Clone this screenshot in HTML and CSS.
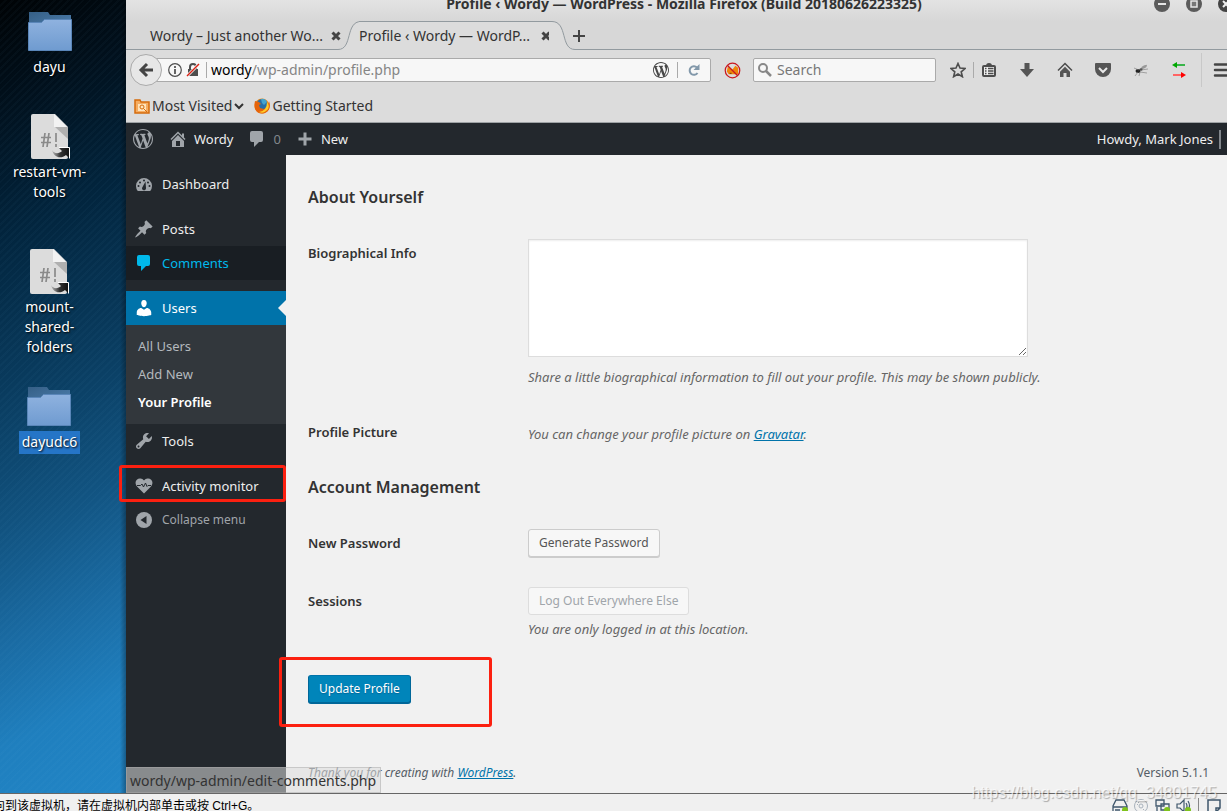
FILE: index.html
```html
<!DOCTYPE html>
<html lang="en">
<head>
<meta charset="utf-8">
<title>Profile ‹ Wordy — WordPress</title>
<link rel="stylesheet" href="styles.css">
</head>
<body>
<svg class="defs" aria-hidden="true">
  <defs>
    <linearGradient id="folderFront" x1="0" y1="0" x2="0" y2="1"><stop offset="0" stop-color="#8fb2df"/><stop offset="1" stop-color="#6f9bd0"/></linearGradient>
    <linearGradient id="folderBack" x1="0" y1="0" x2="1" y2="1"><stop offset="0" stop-color="#355f86"/><stop offset="1" stop-color="#4e7fae"/></linearGradient>
    <linearGradient id="shortcutArrow" x1="0" y1="0" x2="1" y2="0"><stop offset="0" stop-color="#bbb"/><stop offset="0.500" stop-color="#333"/><stop offset="1" stop-color="#111"/></linearGradient>
    <symbol id="folder" viewBox="0 0 46 42">
      <path d="M2 2h19l2 3h21v14H2z" fill="url(#folderBack)"/>
      <path d="M1.500 12.500h13l3-3h27v31h-43z" fill="url(#folderFront)" stroke="#5a86b9"/>
    </symbol>
    <symbol id="script-file" viewBox="0 0 40 48">
      <path d="M3 1h22l13 13v30q0 2-2 2H3q-2 0-2-2V3q0-2 2-2z" fill="#dcdcdc"/>
      <path d="M24 1l13 13H24z" fill="#f2f2f2"/><path d="M25 14h13v12z" fill="#b0b0b0"/>
      <path d="M15 20l-2 14M19 20l-2 14M11 24.500h10M11 29.500h10M26 20v9M26 31v3" stroke="#8a8a8a" stroke-width="1.700" fill="none"/>
      <path d="M22 37c2 4 7 4 10 1l-3-3h10v10l-3-3c-5 4-12 3-14-5z" fill="url(#shortcutArrow)"/>
      <path d="M29 34.500h10.500v11" fill="none" stroke="#fff"/>
    </symbol>
    <symbol id="wp" viewBox="0 0 20 20"><path d="M20 10c0-5.510-4.490-10-10-10C4.480 0 0 4.490 0 10c0 5.520 4.480 10 10 10 5.510 0 10-4.480 10-10zM7.780 15.370L4.370 6.220c.55-.02 1.170-.08 1.170-.08.5-.06.44-1.130-.06-1.110 0 0-1.450.11-2.370.11-.18 0-.37 0-.58-.01C4.120 2.690 6.870 1.110 10 1.110c2.330 0 4.450.87 6.050 2.340-.68-.11-1.650.39-1.650 1.580 0 .74.45 1.360.9 2.100.35.61.55 1.360.55 2.460 0 1.490-1.400 5-1.400 5l-3.030-8.370c.54-.02.82-.17.82-.17.5-.05.44-1.250-.06-1.220 0 0-1.440.12-2.380.12-.87 0-2.330-.12-2.330-.12-.5-.03-.56 1.200-.06 1.220l.92.08 1.260 3.410zM17.410 10c.24-.64.74-1.870.43-4.250.7 1.290 1.050 2.710 1.050 4.250 0 3.290-1.730 6.240-4.400 7.780.97-2.590 1.940-5.200 2.920-7.780zM6.100 18.090C3.120 16.650 1.110 13.530 1.110 10c0-1.300.23-2.480.72-3.590C3.250 10.300 4.670 14.200 6.100 18.090zm4.030-6.630l2.580 6.980c-.86.29-1.760.45-2.710.45-.79 0-1.570-.11-2.290-.33.81-2.380 1.620-4.740 2.420-7.100z"/></symbol>
    <symbol id="home" viewBox="0 0 20 20"><path d="M16 8.500l1.530 1.530-1.060 1.060L10 4.600l-6.470 6.490-1.060-1.060L10 2.500l4 4v-2h2v4zm-6-2.460l6 5.990V18H4v-5.970zM12 17v-5H8v5h4z"/></symbol>
    <symbol id="comment" viewBox="0 0 20 20"><path d="M5 2h9q2 0 2 2v7q0 2-2 2h-2l-5 5v-5H5q-2 0-2-2V4q0-2 2-2z"/></symbol>
  </defs>
</svg>
<div class="screen">
  <div class="machine">
    <aside class="desktop" aria-label="Desktop">
      <div class="shortcut"><svg class="folder"><use href="#folder"/></svg><span class="label">dayu</span></div>
      <div class="shortcut shortcut-two"><svg class="file"><use href="#script-file"/></svg><span class="label">restart-vm-tools</span></div>
      <div class="shortcut shortcut-three"><svg class="file"><use href="#script-file"/></svg><span class="label">mount-<br>shared-<br>folders</span></div>
      <div class="shortcut shortcut-four"><svg class="folder"><use href="#folder"/></svg><span class="label selected">dayudc6</span></div>
    </aside>

    <div class="browser">
      <header class="titlebar">
        <div class="window-title">Profile ‹ Wordy — WordPress - Mozilla Firefox (Build 20180626223325)</div>
        <div class="window-buttons">
          <button aria-label="Minimize"><svg viewBox="0 0 16 16"><circle cx="8" cy="8" r="8" fill="#5b5b5b"/><path d="M4 8h8" stroke="#e6e6e6" stroke-width="2"/></svg></button>
          <button aria-label="Maximize"><svg viewBox="0 0 16 16"><circle cx="8" cy="8" r="8" fill="#5b5b5b"/><path d="M5 5h6v6H5z" stroke="#e6e6e6" stroke-width="1.500" fill="#777"/></svg></button>
          <button aria-label="Close"><svg viewBox="0 0 16 16"><circle cx="8" cy="8" r="8" fill="#444"/><path d="M5 5l6 6M11 5l-6 6" stroke="#eee" stroke-width="2"/></svg></button>
        </div>
      </header>
      <nav class="tabs" aria-label="Tabs">
        <div class="tab"><span class="tab-title">Wordy – Just another Wo...</span><button class="tab-close" aria-label="Close tab"><svg viewBox="0 0 10 10"><path d="M1.500 1.500l7 7M8.500 1.500l-7 7"/></svg></button></div>
        <svg class="curve" viewBox="0 0 28 29"><path d="M0 28.500C18 28.500 8 .5 28 .5V29H0z" fill="#dcdcdc"/><path d="M0 28.500h2C17 28.500 9 .5 25 .5h3" fill="none" stroke="#929a9f"/></svg>
        <div class="tab tab-active"><span class="tab-title">Profile ‹ Wordy — WordP...</span><button class="tab-close" aria-label="Close tab"><svg viewBox="0 0 10 10"><path d="M1.500 1.500l7 7M8.500 1.500l-7 7"/></svg></button></div>
        <svg class="curve" viewBox="0 0 28 29"><path d="M28 28.500C10 28.500 20 .5 0 .5V29h28z" fill="#dcdcdc"/><path d="M28 28.500h-2C11 28.500 19 .5 3 .5H0" fill="none" stroke="#929a9f"/></svg>
        <button class="new-tab" aria-label="New tab"><svg viewBox="0 0 12 12"><path d="M6 0v12M0 6h12"/></svg></button>
      </nav>
      <div class="toolbar">
        <button class="back" aria-label="Back"><svg viewBox="0 0 16 16"><path d="M9 2L3 8l6 6M3.500 8H15" fill="none" stroke="#444" stroke-width="3"/></svg></button>
        <div class="address">
          <svg class="i14" viewBox="0 0 14 14"><circle cx="7" cy="7" r="6.300" fill="none" stroke="#4d4d4d" stroke-width="1.200"/><path d="M7 3v2M7 6v5" stroke="#4d4d4d" stroke-width="1.700"/></svg>
          <svg class="i14" viewBox="0 0 14 14"><path d="M4 7V4q0-3 3-3t3 3v3" fill="none" stroke="#4d4d4d" stroke-width="2"/><path d="M2 6h10v7H2z" fill="#4d4d4d"/><path d="M1 13L13 1" stroke="#f7f7f7" stroke-width="3"/><path d="M1 13L13 1" stroke="#d92215" stroke-width="1.500"/></svg>
          <span class="rule"></span>
          <span class="url"><b>wordy</b>/wp-admin/profile.php</span>
          <svg class="i16 dark"><use href="#wp"/></svg>
          <span class="rule rule-reload"></span>
          <button class="icon" aria-label="Reload"><svg class="i14" viewBox="0 0 14 14"><path d="M10 4.500A4.300 4.300 0 1 0 10.500 10" fill="none" stroke="#8298aa" stroke-width="2"/><path d="M12.500 1v6h-6z" fill="#8298aa"/></svg></button>
        </div>
        <button class="icon no-script" aria-label="Script blocker"><svg viewBox="0 0 18 18"><path d="M4 5l5 3 3-4 3 2v7H5l-2-3z" fill="#ef850c"/><path d="M6 12h2M7 7l2 2" stroke="#713700"/><circle cx="9" cy="9" r="7.700" fill="none" stroke="#c9171e" stroke-width="1.300"/><path d="M3.500 3.500l11 11" stroke="#c9171e" stroke-width="1.300"/></svg></button>
        <label class="search"><svg class="i14" viewBox="0 0 14 14"><circle cx="5" cy="5" r="4" fill="none" stroke="#888" stroke-width="2"/><path d="M8 8l5 5" stroke="#888" stroke-width="2.500"/></svg><input type="text" placeholder="Search" aria-label="Search"></label>
        <button class="icon star" aria-label="Bookmark"><svg class="i16" viewBox="0 0 16 16"><path d="M8 1.500l2 4.600 5 .4-3.800 3.300 1.200 4.900L8 12l-4.400 2.700 1.200-4.900L1 6.500l5-.4z" fill="none" stroke="#4d4d4d" stroke-width="1.600"/></svg></button>
        <span class="rule rule-tools"></span>
        <div class="tools">
          <button class="icon" aria-label="Library"><svg class="i16" viewBox="0 0 16 16"><rect x="2" y="4" width="12" height="10" rx="1" fill="#eee" stroke="#4d4d4d" stroke-width="2"/><path d="M5 4q0-3 3-3t3 3z" fill="#4d4d4d"/><path d="M4 6.500h1.500M7 6.500h5.500M4 9h1.500M7 9h5.500M4 11.500h1.500M7 11.500h5.500" stroke="#4d4d4d" stroke-width="1.300"/></svg></button>
          <button class="icon" aria-label="Downloads"><svg class="i16" viewBox="0 0 16 16"><path d="M5.500 1h5v6H15l-7 8-7-8h4.500z" fill="#555"/></svg></button>
          <button class="icon" aria-label="Home"><svg class="i16" viewBox="0 0 16 16"><path d="M1 8.500l7-7 7 7" fill="none" stroke="#4d4d4d" stroke-width="1.500"/><path d="M3 9.800l5-5 5 5V15H9.500v-4h-3v4H3z" fill="#555"/></svg></button>
          <button class="icon" aria-label="Pocket"><svg class="i16" viewBox="0 0 16 16"><path d="M1 1h14q1 0 1 1v5a8 8 0 0 1-16 0V2q0-1 1-1z" fill="#555"/><path d="M4 6l4 4 4-4" fill="none" stroke="#e8e8e8" stroke-width="2"/></svg></button>
          <button class="icon" aria-label="Debugger"><svg class="i16" viewBox="0 0 16 16"><ellipse cx="5" cy="9" rx="2.500" ry="2" fill="#222"/><path d="M7 8l7-5M8 8l7-1M7 10l7 1M6 8L1 6M5 10l-3 4M7 10l-1 4M9 6l4-2" stroke="#777" stroke-width=".6"/><ellipse cx="11" cy="5" rx="3" ry="1.500" fill="#999" transform="rotate(-25 11 5)"/><ellipse cx="8" cy="7.500" rx="1.500" ry="1.200" fill="#555"/></svg></button>
          <button class="icon" aria-label="Proxy"><svg class="i16" viewBox="0 0 16 16"><path d="M4 3h10" stroke="#39b54a" stroke-width="2"/><path d="M1 3l5-3v6z" fill="#00a800"/><path d="M2 13h9" stroke="#ff6464" stroke-width="2"/><path d="M15 13l-5-3v6z" fill="#f00"/></svg></button>
          <span class="rule rule-menu"></span>
          <button class="icon" aria-label="Menu"><svg class="i16" viewBox="0 0 16 16"><path d="M2 2.500h14M2 8h14M2 13.500h14" stroke="#444" stroke-width="2.500" stroke-linecap="round"/></svg></button>
        </div>
      </div>
      <div class="bookmarks">
        <button class="bookmark"><svg class="i16" viewBox="0 0 16 16"><path d="M1 2h5l1 2h8v11H1z" fill="#f5ad62" stroke="#d56b0b" stroke-width="1.500"/><path d="M4 6h8v7H4z" fill="#ffe4bb"/><circle cx="8" cy="9" r="2" fill="none" stroke="#d56b0b"/><path d="M9.500 10.500L13 14" stroke="#d56b0b"/></svg>Most Visited<svg class="chevron" viewBox="0 0 10 8"><path d="M1 2l4 4 4-4" fill="none" stroke="#333" stroke-width="2"/></svg></button>
        <a class="bookmark" href="#"><svg class="i16" viewBox="0 0 16 16"><circle cx="8" cy="8" r="7.500" fill="#f28b13"/><circle cx="8" cy="6.500" r="5.500" fill="#286fa8"/><path d="M7 1q4-1 6 3l-3 3-2-2z" fill="#45a4cf"/><path d="M1 3l4 1 2 2-2 1 1 3 4 1 4-3 1-5q3 9-4 12-7 2-10-4Q0 7 1 3z" fill="#e5630b"/><path d="M13 4q4 6-1 9-3 3-7 1 8-1 8-10z" fill="#ffcc27"/></svg>Getting Started</a>
      </div>

      <div class="page">
        <div class="adminbar">
          <a href="#" aria-label="About WordPress"><svg class="i20"><use href="#wp"/></svg></a>
          <a href="#"><svg class="i20"><use href="#home"/></svg>Wordy</a>
          <a href="#" class="count"><svg class="i20"><use href="#comment"/></svg>0</a>
          <a href="#" class="new"><svg class="i20" viewBox="0 0 20 20"><path d="M10 3.500v13M3.500 10h13" stroke="#a0a5aa" stroke-width="3"/></svg>New</a>
          <a href="#" class="account">Howdy, Mark Jones<span class="avatar"></span></a>
        </div>
        <div class="columns">
          <nav class="menu" aria-label="Main menu">
            <a class="item" href="#"><svg class="i20" viewBox="0 0 20 20"><path d="M3.760 17h12.480A8 8 0 1 0 3.760 17z"/><g fill="#23282d"><circle cx="10" cy="6.500" r="1"/><circle cx="6" cy="8.500" r="1"/><circle cx="14" cy="8.500" r="1"/><circle cx="4.500" cy="12" r="1"/><circle cx="15.500" cy="12" r="1"/><path d="M11.500 7.500l.5 6.500a2 2 0 1 1-3.500-1z"/></g></svg>Dashboard</a>
            <a class="item gap" href="#"><svg class="i20" viewBox="0 0 20 20"><path d="M10.440 3.020l1.820-1.820 6.360 6.350-1.830 1.820c-1.050-.68-2.480-.57-3.410.36l-.75.75c-.92.93-1.040 2.350-.35 3.410l-1.830 1.820-2.410-2.410-2.800 2.790c-.42.42-3.380 2.710-3.800 2.290s1.860-3.390 2.280-3.810l2.790-2.790L4.100 9.360l1.830-1.820c1.050.69 2.480.57 3.400-.36l.75-.75c.93-.92 1.050-2.350.36-3.410z"/></svg>Posts</a>
            <a class="item hover" href="#"><svg class="i20"><use href="#comment"/></svg>Comments</a>
            <a class="item gap current" href="#"><svg class="i20" viewBox="0 0 20 20"><path d="M10 9.250c-2.270 0-2.730-3.440-2.730-3.440C7 4.020 7.820 2 9.970 2c2.160 0 2.980 2.020 2.710 3.810 0 0-.41 3.440-2.680 3.440zm0 2.570L12.720 10c2.390 0 4.520 2.330 4.520 4.530v2.490s-3.650 1.130-7.240 1.130c-3.650 0-7.240-1.130-7.240-1.130v-2.490c0-2.250 1.940-4.480 4.470-4.480z"/></svg>Users</a>
            <div class="submenu"><a href="#">All Users</a><a href="#">Add New</a><a href="#" class="chosen">Your Profile</a></div>
            <a class="item" href="#"><svg class="i20" viewBox="0 0 20 20"><path d="M16.680 9.770c-1.340 1.340-3.300 1.670-4.950.99l-5.410 6.520c-.99.99-2.590.99-3.580 0s-.99-2.590 0-3.570l6.520-5.420c-.68-1.650-.35-3.610.99-4.950 1.280-1.280 3.120-1.620 4.720-1.060l-2.890 2.890 2.820 2.820 2.860-2.870c.53 1.580.18 3.390-1.080 4.650zM3.810 16.210c.4.39 1.040.39 1.430 0 .4-.4.4-1.040 0-1.430-.39-.4-1.030-.4-1.430 0-.39.39-.39 1.030 0 1.430z"/></svg>Tools</a>
            <a class="item gap marked" href="#"><svg class="i20" viewBox="0 0 20 20"><path d="M10 17.500L3 10.500C-.5 6 3 2 6.500 2.500q2 0 3.500 2 1.500-2 3.500-2C17 2 20.500 6 17 10.500z"/><path d="M3 9.500h3.500l1.500-1.500 1.500 3 2-4 1.500 3.500 1-1h3" fill="none" stroke="#23282d" stroke-width="1"/></svg>Activity monitor</a>
            <button class="item collapse"><svg class="i20" viewBox="0 0 20 20"><circle cx="10" cy="10" r="8"/><path d="M12.500 6v8l-6-4z" fill="#23282d"/></svg>Collapse menu</button>
          </nav>
          <main class="content">
            <form class="profile">
              <h2>About Yourself</h2>
              <div class="row row-bio"><label class="name" for="bio">Biographical Info</label><div><textarea id="bio"></textarea><p>Share a little biographical information to fill out your profile. This may be shown publicly.</p></div></div>
              <div class="row row-picture"><span class="name">Profile Picture</span><p>You can change your profile picture on <a href="#">Gravatar</a>.</p></div>
              <h2>Account Management</h2>
              <div class="row row-password"><span class="name">New Password</span><div><button type="button" class="button">Generate Password</button></div></div>
              <div class="row row-sessions"><span class="name">Sessions</span><div><button type="button" class="button" disabled>Log Out Everywhere Else</button><p>You are only logged in at this location.</p></div></div>
              <div class="submit"><button type="button" class="button primary">Update Profile</button></div>
            </form>
            <footer class="footer"><p>Thank you for creating with <a href="#">WordPress</a>.</p><span>Version 5.1.1</span></footer>
          </main>
        </div>
        <div class="link-status">wordy/wp-admin/edit-comments.php</div>
      </div>
    </div>
  </div>
  <footer class="host">
    <span class="host-text">向到该虚拟机，请在虚拟机内部单击或按 Ctrl+G。</span>
    <div class="devices">
      <svg viewBox="0 0 16 16"><path d="M4 2h8l3 6v6H1V8zM1 9h14M3 12h5" fill="none" stroke="#3e566b" stroke-width="1.300"/><circle cx="13" cy="12" r="3" fill="#7fc31c"/></svg>
      <svg viewBox="0 0 16 16"><circle cx="8" cy="8" r="6.500" fill="none" stroke="#a8b2bc"/><circle cx="8" cy="8" r="2" fill="none" stroke="#a8b2bc"/><path d="M5 4l1 1M10 11l1 1M4 6l1 1" stroke="#a8b2bc"/></svg>
      <svg viewBox="0 0 16 16"><path d="M2 2h8v6H2zM7 6h8v6H7zM3 9v5" fill="#eee" stroke="#3e566b" stroke-width="1.300"/><circle cx="13" cy="12" r="3" fill="#7fc31c"/></svg>
      <svg viewBox="0 0 16 16"><path d="M2 6h3l4-4v12l-4-4H2zM11 5q2 3 0 6M13 3q3 5 0 9" fill="none" stroke="#3e566b" stroke-width="1.200"/><circle cx="13" cy="12" r="3" fill="#7fc31c"/></svg>
      <span class="host-rule"></span>
      <svg viewBox="0 0 16 16"><path d="M2 2h12v8l-4 4H2zM14 10h-4v4" fill="none" stroke="#3e566b" stroke-width="1.500"/></svg>
    </div>
  </footer>
  <div class="watermark">https://blog.csdn.net/qq_34801745</div>
</div>
</body>
</html>
```
FILE: styles.css
```css
*, *::before, *::after { box-sizing: border-box; }
body { margin: 0; font: 14px/20px "Noto Sans", sans-serif; color: #23282d; }
p, h2 { margin: 0; }
button { font: inherit; color: inherit; margin: 0; padding: 0; border: 0; background: none; }
a { color: inherit; text-decoration: none; }
svg { display: block; flex: none; }
.defs { position: absolute; width: 0; height: 0; }
.i14 { width: 14px; height: 14px; }
.i16 { width: 16px; height: 16px; }
.i20 { width: 20px; height: 20px; }

.screen { position: relative; display: flex; flex-direction: column; height: 100vh; overflow: hidden; }
.machine { flex: 1; display: flex; min-height: 0; }

.desktop {
  width: 126px; flex: none; padding: 10px 27px 0 0;
  display: flex; flex-direction: column; align-items: center;
  color: #fff; text-align: center; text-shadow: 1px 1px 2px #000;
  background:
    linear-gradient(90deg, transparent 120px, rgba(0, 0, 0, .3) 126px),
    repeating-linear-gradient(135deg, transparent 0 3px, rgba(120, 190, 230, .03) 3px 5px),
    linear-gradient(155deg, #000305 0%, #01101c 12%, #02253e 28%, #093b5e 46%, #11527f 62%, #1a6ba3 76%, #1f7fbe 88%, #2185c6 100%);
}
.shortcut { display: flex; flex-direction: column; align-items: center; }
.shortcut-two { margin-top: 36px; }
.shortcut-three { margin-top: 46px; }
.shortcut-four { margin-top: 28px; }
.folder { width: 46px; height: 42px; margin-bottom: 5px; }
.file { width: 40px; height: 48px; margin-bottom: 1px; }
.shortcut-four .folder { margin-bottom: 4px; }
.label { max-width: 90px; }
.selected { padding: 1px 3px 2px; background: #2575c7; }

.browser { flex: 1; min-width: 0; display: flex; flex-direction: column; color: #333; background: #dcdcdc; }
.titlebar { position: relative; height: 21px; overflow: hidden; display: flex; justify-content: center; align-items: flex-start; background: linear-gradient(#e3e3e3, #d7d7d7); }
.window-title { margin-top: -6px; padding-left: 15px; font-weight: 700; white-space: nowrap; }
.window-buttons { position: absolute; right: -7px; top: -4px; display: flex; gap: 16px; }
.window-buttons svg { width: 16px; height: 16px; }
.tabs { display: flex; height: 29px; background: #d7d7d7; box-shadow: inset 0 -1px #929a9f; }
.tab { display: flex; align-items: center; gap: 8px; padding-left: 24px; }
.tab-title { width: 173px; white-space: nowrap; }
.tab-active { background: #dcdcdc; border-top: 1px solid #929a9f; padding-left: 0; }
.tab-close svg { width: 10px; height: 10px; stroke: #444; stroke-width: 3; }
.curve { width: 28px; height: 29px; margin: 0 -5px; }
.tab-active + .curve { margin: 0 -4px 0 -2px; }
.tab-active .tab-title { width: 174px; }
.new-tab svg { width: 12px; height: 12px; stroke: #444; stroke-width: 2; }
.toolbar { display: flex; align-items: center; height: 40px; padding-left: 4px; }
.back { z-index: 1; display: grid; place-items: center; width: 32px; height: 32px; flex: none; border: 1px solid #aaa; border-radius: 50%; background: #e7e7e7; }
.back svg { width: 16px; height: 16px; }
.address { flex: 1; display: flex; align-items: center; gap: 4px; min-width: 0; height: 24px; margin-left: -6px; padding: 0 9px 0 11px; border: 1px solid #aaa; border-radius: 0 2px 2px 0; background: #f7f7f7; }
.rule { width: 1px; height: 16px; margin: 0 0 0 2px; background: #aaa; }
.url { flex: 1; color: #858585; }
.url b { font-weight: 400; color: #000; }
.dark { fill: #484848; }
.rule-reload { margin: 0 5px 0 4px; }
.icon { flex: none; }
.no-script { margin: 0 12px 0 13px; }
.no-script svg { width: 17px; height: 17px; }
.search { display: flex; align-items: center; gap: 5px; width: 183px; height: 24px; padding-left: 4px; border: 1px solid #aaa; border-radius: 2px; background: #f7f7f7; }
.search input { flex: 1; min-width: 0; padding: 0; border: 0; background: none; font: inherit; }
.search input::placeholder { color: #777; opacity: 1; }
.star { margin-left: 14px; }
.rule-tools { margin: 0 7px; }
.tools { display: flex; align-items: center; gap: 22px; margin-right: -2px; }
.rule-menu { height: 34px; margin: 0 -11px 0 -8px; background: #c8c8c8; }
.bookmarks { display: flex; gap: 10px; height: 33px; padding: 0 8px; border-bottom: 1px solid #9ea2a5; }
.bookmark { display: flex; align-items: center; gap: 2px; }
.chevron { width: 10px; height: 8px; }

.page { position: relative; flex: 1; min-height: 0; display: flex; flex-direction: column; font-size: 13px; background: #f1f1f1; }
.adminbar { flex: none; display: flex; align-items: center; height: 32px; padding: 0 6px 0 7px; color: #eee; background: #23282d; }
.adminbar a { display: flex; align-items: center; gap: 6px; margin-right: 14px; }
.adminbar a:first-child { margin-right: 15px; }
.adminbar svg { fill: #a0a5aa; }
.adminbar .count { color: #82878c; }
.adminbar .account { margin: 0 0 0 auto; }
.avatar { width: 2px; height: 19px; background: #82878c; }
.columns { flex: 1; display: flex; min-height: 0; }
.menu { flex: none; width: 160px; padding-top: 12px; background: #23282d; color: #eee; }
.item { position: relative; display: flex; align-items: center; gap: 8px; width: 100%; height: 34px; padding-left: 8px; }
.item svg { fill: #a0a5aa; }
.gap { margin-top: 11px; }
.hover { color: #00b9eb; background: #191e23; }
.hover svg { fill: #00b9eb; }
.current { color: #fff; background: #0073aa; }
.current svg { fill: #fff; }
.current::after { content: ""; position: absolute; right: 0; top: 9px; border: 8px solid transparent; border-left: 0; border-right-color: #f1f1f1; }
.submenu { display: flex; flex-direction: column; padding: 7px 12px 8px; background: #32373c; color: #b4b9be; }
.submenu a { padding: 4px 0; }
.submenu .chosen { font-weight: 600; color: #fff; }
.marked::after { content: ""; position: absolute; z-index: 2; inset: -4px 0 1px -7px; border: 3px solid #fc2010; border-radius: 3px; }
.collapse { font-size: 12px; color: #a0a5aa; }

.content { flex: 1; min-width: 0; display: flex; flex-direction: column; padding: 32px 18px 10px 22px; }
.content h2 { font-size: 16px; font-weight: 600; }
.row { display: grid; grid-template-columns: 220px 1fr; }
.row .name { font-weight: 600; }
.row p { font-style: italic; color: #666; }
.row-bio { margin-top: 32px; }
.row-bio .name { padding-top: 4px; }
.row-bio p { margin-top: 10px; }
textarea { display: block; width: 500px; max-width: 100%; height: 118px; border: 1px solid #ddd; background: #fff; box-shadow: inset 0 1px 2px rgba(0, 0, 0, .07); }
.row-picture { margin: 35px 0 33px; }
.row-picture p { padding-top: 2px; }
.row a, .footer a { color: #0073aa; text-decoration: underline; }
.row-password { margin-top: 32px; }
.row-password .name, .row-sessions .name { padding-top: 4px; }
.row-sessions { margin-top: 30px; }
.row-sessions p { margin-top: 4px; }
.button { display: block; height: 28px; padding: 0 10px; border: 1px solid #ccc; border-radius: 3px; background: #f7f7f7; color: #555; font-size: 12px; box-shadow: 0 1px #ccc; }
.button:disabled { color: #a0a5aa; border-color: #ddd; box-shadow: none; }
.submit { position: relative; margin-top: 36px; }
.submit::after { content: ""; position: absolute; left: -29px; top: -18px; width: 213px; height: 70px; border: 3px solid #fc2010; border-radius: 3px; pointer-events: none; }
.primary { color: #fff; background: #0085ba; border-color: #0073aa #006799 #006799; box-shadow: 0 1px #006799; text-shadow: 0 1px 1px #006799; }
.footer { display: flex; justify-content: space-between; margin-top: auto; font-size: 12px; color: #555d66; }
.footer p { font-style: italic; }
.link-status { position: absolute; left: 0; bottom: 0; padding: 3px 4px 1px 3px; font-size: 14px; color: #333; background: rgba(220, 220, 220, .55); border: 1px solid rgba(170, 170, 170, .5); }

.host { flex: none; display: flex; justify-content: space-between; height: 18px; overflow: hidden; border-top: 1px solid #666; background: #f0f0f0; color: #000; }
.host-text { margin-left: -7px; padding-top: 2px; font: 12px/20px "Liberation Sans", "Noto Sans CJK SC", sans-serif; white-space: nowrap; }
.devices { display: flex; gap: 5px; padding: 4px 5px 0 0; }
.devices svg { width: 16px; height: 16px; }
.host-rule { width: 1px; height: 16px; margin: 0 2px; background: #888; }
.watermark { position: absolute; right: 10px; bottom: 8px; font: 16px/20px "Liberation Sans", sans-serif; color: rgba(255, 255, 255, .7); text-shadow: 1px 1px 1px rgba(0, 0, 0, .3); }
```
